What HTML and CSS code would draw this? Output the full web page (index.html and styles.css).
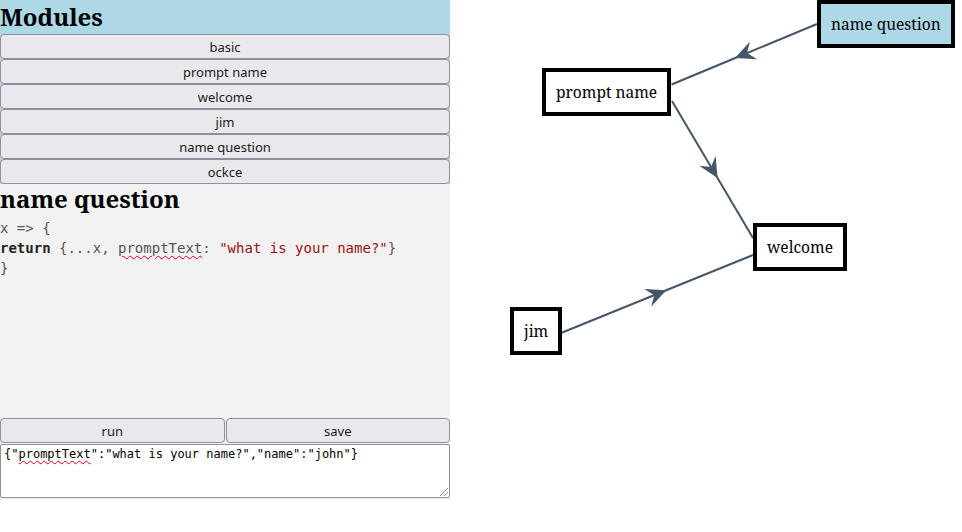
FILE: index.html
```html
<!DOCTYPE html>
<html>
<head>
    <title>Modules</title>
    <link rel="stylesheet" href="styles.css">
</head>
<body>
    <div class="sidebar">
        <div class="modules">
            <h2 class="modules-title">Modules</h2>
            <button class="module-btn">basic</button>
            <button class="module-btn">prompt name</button>
            <button class="module-btn">welcome</button>
            <button class="module-btn">jim</button>
            <button class="module-btn">name question</button>
            <button class="module-btn">ockce</button>
        </div>
        <div class="editor">
            <h2 class="editor-title">name question</h2>
            <div class="code" contenteditable="true" spellcheck="false">
                <div>x =&gt; {</div>
                <div><b class="kw">return</b> {...x, <span class="typo">promptText</span>: <span class="str">"what is your name?"</span>}</div>
                <div>}</div>
            </div>
            <div class="actions">
                <button class="action-btn">run</button>
                <button class="action-btn">save</button>
            </div>
            <div class="output">{"<span class="typo">promptText</span>":"what is your name?","name":"john"}</div>
        </div>
    </div>

    <div class="graph">
        <svg class="edges" width="512" height="532">
            <defs>
                <marker id="arrow" viewBox="-12 -12 24 24" markerWidth="24" markerHeight="24"
                        markerUnits="userSpaceOnUse" orient="auto">
                    <path class="arrow-head" d="M10 0 L-10 -9.5 L-3 0 L-10 9.5 Z"/>
                </marker>
            </defs>
            <!-- name question -> prompt name -->
            <path class="edge" d="M367 24 L294.25 54.25 L221.5 84.5" marker-mid="url(#arrow)"/>
            <!-- prompt name -> welcome -->
            <path class="edge" d="M222 101 L262.5 169.5 L303 238" marker-mid="url(#arrow)"/>
            <!-- jim -> welcome -->
            <path class="edge" d="M111 333 L207 294 L303 255" marker-mid="url(#arrow)"/>
        </svg>

        <div class="node selected" style="left: 367px; top: 0px;">name question</div>
        <div class="node" style="left: 92px; top: 68px;">prompt name</div>
        <div class="node" style="left: 303px; top: 223px;">welcome</div>
        <div class="node" style="left: 60px; top: 307px;">jim</div>
    </div>
</body>
</html>
```

FILE: styles.css
```css
body {
    margin: 0;
    padding: 0;
    display: flex;
    align-items: flex-start;
    background: #fff;
    font-family: "Noto Serif", "DejaVu Serif", serif;
    overflow: hidden;
}

.sidebar {
    width: 450px;
    flex-shrink: 0;
}

.modules {
    background: #add8e6;
}

.modules-title,
.editor-title {
    margin: 0;
    font-size: 24px;
    font-weight: bold;
    color: #000;
}

.modules-title {
    line-height: 34px;
}

button {
    font-family: "Noto Sans", sans-serif;
    font-size: 13px;
    color: #1b1b1b;
    background: #e9e9ed;
    border: 1px solid #8f8f9d;
    border-radius: 4px;
    padding: 0;
    height: 25px;
}

.module-btn {
    display: block;
    width: 100%;
}

.editor {
    background: #f2f2f2;
    padding-bottom: 2px;
}

.editor-title {
    line-height: 30px;
}

.code {
    height: 200px;
    padding-top: 4px;
    font-family: "DejaVu Sans Mono", monospace;
    font-size: 14px;
    line-height: 20px;
    color: #555;
    outline: none;
}

.kw { color: #222; }
.str { color: #991111; }

.typo {
    text-decoration: underline wavy #e0001a;
    text-decoration-thickness: 1px;
    text-underline-offset: 2px;
}

.actions {
    display: grid;
    grid-template-columns: 1fr 1fr;
    gap: 1px;
}

.output {
    position: relative;
    margin-top: 1px;
    height: 48px;
    padding: 2px 3px;
    background: #fff;
    border: 1px solid #8f8f9d;
    border-radius: 2px;
    font-family: "DejaVu Sans Mono", monospace;
    font-size: 12px;
    line-height: 15px;
    color: #000;
}

/* resize grip */
.output::after {
    content: "";
    position: absolute;
    right: 1px;
    bottom: 1px;
    width: 10px;
    height: 10px;
    background: repeating-linear-gradient(135deg, transparent 0 2px, #8f8f9d 2px 3px);
    clip-path: polygon(100% 0, 100% 100%, 0 100%);
}

.graph {
    position: relative;
    flex: 1;
    height: 532px;
}

.edges {
    position: absolute;
    left: 0;
    top: 0;
}

.edge {
    stroke: #475569;
    stroke-width: 2;
    fill: none;
}

.arrow-head {
    fill: #475569;
    stroke: none;
}

.node {
    position: absolute;
    padding: 10px;
    border: 4px solid #000;
    background: #fff;
    font-size: 15.5px;
    line-height: 20px;
    white-space: nowrap;
}

.node.selected {
    background: #add8e6;
}
```
